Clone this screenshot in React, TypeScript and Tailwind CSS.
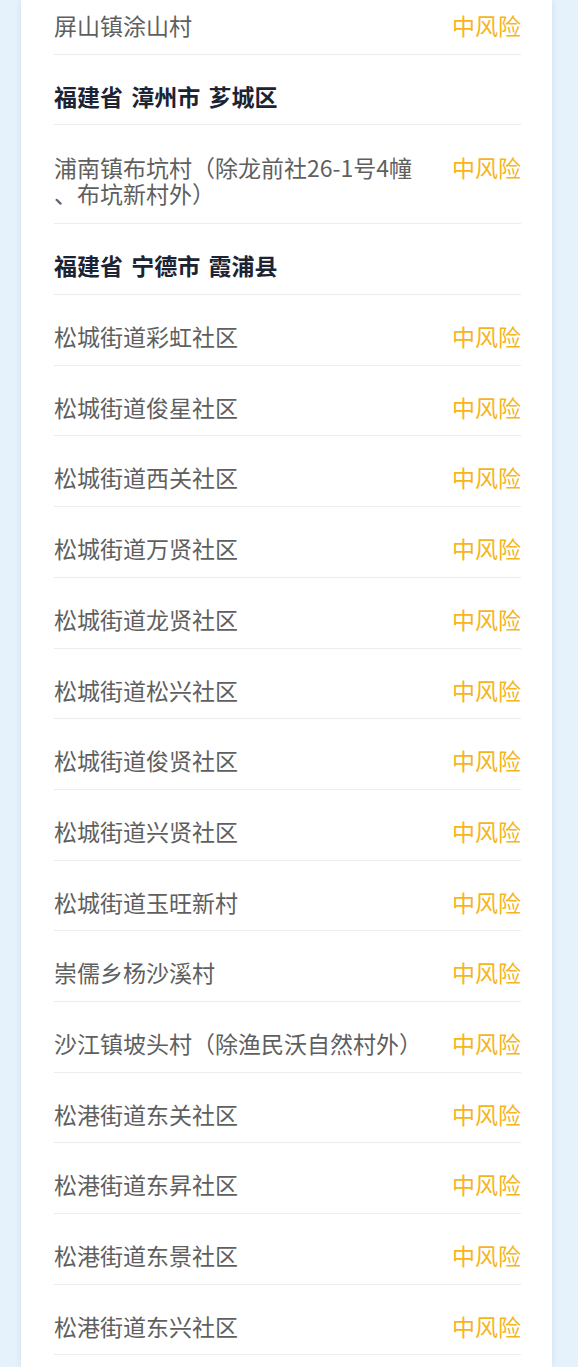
import React from "react";

type Item =
  | { kind: "head"; text: string }
  | { kind: "row"; text: React.ReactNode; two?: boolean; first?: boolean };

const items: Item[] = [
  { kind: "row", text: "屏山镇涂山村", first: true },
  { kind: "head", text: "福建省 漳州市 芗城区" },
  {
    kind: "row",
    two: true,
    text: (
      <>
        浦南镇布坑村（除龙前社26-1号4幢
        <br />
        、布坑新村外）
      </>
    ),
  },
  { kind: "head", text: "福建省 宁德市 霞浦县" },
  { kind: "row", text: "松城街道彩虹社区" },
  { kind: "row", text: "松城街道俊星社区" },
  { kind: "row", text: "松城街道西关社区" },
  { kind: "row", text: "松城街道万贤社区" },
  { kind: "row", text: "松城街道龙贤社区" },
  { kind: "row", text: "松城街道松兴社区" },
  { kind: "row", text: "松城街道俊贤社区" },
  { kind: "row", text: "松城街道兴贤社区" },
  { kind: "row", text: "松城街道玉旺新村" },
  { kind: "row", text: "崇儒乡杨沙溪村" },
  { kind: "row", text: "沙江镇坡头村（除渔民沃自然村外）" },
  { kind: "row", text: "松港街道东关社区" },
  { kind: "row", text: "松港街道东昇社区" },
  { kind: "row", text: "松港街道东景社区" },
  { kind: "row", text: "松港街道东兴社区" },
];

export default function App() {
  return (
    <div
      className="min-h-[1367px] w-[578px] overflow-hidden bg-[#e6f2fb] pl-[21px] pr-[26px]"
      style={{ fontFamily: '"Noto Sans CJK SC", "Noto Sans", sans-serif' }}
    >
      <div className="min-h-[1367px] bg-white pl-[33px] pr-[31px] shadow-[0_0_6px_rgba(150,190,220,0.35)]">
        {items.map((it, i) =>
          it.kind === "head" ? (
            <div
              key={i}
              className="border-b border-[#ececec] pt-[25px] pb-[12.7px] text-[23px] font-bold leading-[32px] text-[#1b2435] [word-spacing:3px]"
            >
              {it.text}
            </div>
          ) : it.two ? (
            <div
              key={i}
              className="flex items-start justify-between border-b border-[#ececec] pt-[29px] pb-[17px]"
            >
              <div className="text-[23px] leading-[26px] text-[#5f5f5f]">{it.text}</div>
              <div className="text-[23px] leading-[26px] text-[#f6b51c]">中风险</div>
            </div>
          ) : (
            <div
              key={i}
              className={
                "flex items-center justify-between border-b border-[#ececec] pb-[12.7px] " +
                (it.first ? "pt-[9px]" : "pt-[25px]")
              }
            >
              <div className="text-[23px] leading-[32px] text-[#5f5f5f]">{it.text}</div>
              <div className="text-[23px] leading-[32px] text-[#f6b51c]">中风险</div>
            </div>
          )
        )}
      </div>
    </div>
  );
}
